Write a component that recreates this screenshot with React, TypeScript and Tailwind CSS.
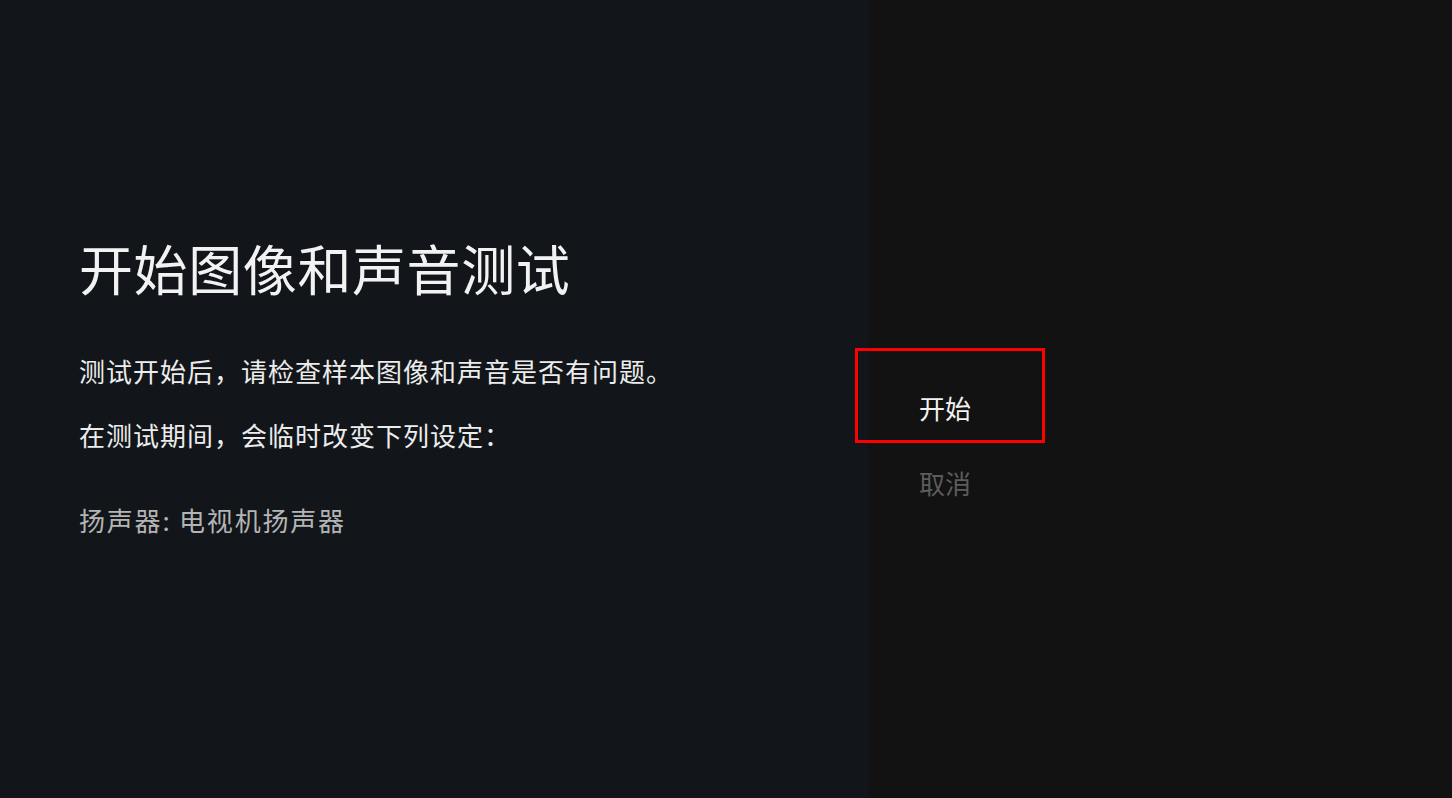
export default function App() {
  const font = { fontFamily: '"Noto Sans CJK SC", "Noto Sans", sans-serif' }
  return (
    <div className="flex w-[1452px] h-[798px] overflow-hidden" style={font}>
      <div className="w-[868px] h-full bg-[#12161a] pl-[79px] pt-[233px]">
        <h1 className="text-[54px] leading-[70px] tracking-[0.6px] text-[#f2f2f2] font-normal">
          开始图像和声音测试
        </h1>
        <p className="mt-[50px] text-[26px] leading-[36px] tracking-[1px] text-[#ececec]">
          测试开始后，请检查样本图像和声音是否有问题。
        </p>
        <p className="mt-[28px] text-[26px] leading-[36px] tracking-[1px] text-[#ececec]">
          在测试期间，会临时改变下列设定：
        </p>
        <p className="mt-[49px] text-[26px] leading-[36px] tracking-[1.8px] text-[#b4b4b4]">
          扬声器: 电视机扬声器
        </p>
      </div>
      <div className="flex-1 h-full bg-[#121212] pt-[348px]">
        <div className="-ml-[13px] w-[190px] flex flex-col items-center">
          <button className="w-[190px] h-[95px] border-[3px] border-[#ff0000] flex items-end justify-center pb-[14px] pr-[10px] text-[26px] leading-[36px] text-[#f2f2f2]">
            开始
          </button>
          <div className="mt-[22px] pr-[10px] text-[26px] leading-[36px] text-[#5c5c5c]">取消</div>
        </div>
      </div>
    </div>
  )
}
